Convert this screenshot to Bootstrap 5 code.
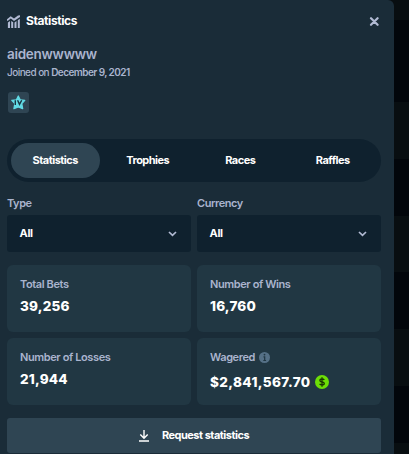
<!DOCTYPE html>
<html lang="en">
<head>
<meta charset="utf-8">
<meta name="viewport" content="width=device-width, initial-scale=1">
<title>Statistics</title>
<link href="https://cdn.jsdelivr.net/npm/bootstrap@5.3.0/dist/css/bootstrap.min.css" rel="stylesheet">
<style>
body{height:454px;overflow:hidden;font-family:Inter,"Noto Sans",sans-serif;color:#fff;
background:linear-gradient(#080e11 20px,#02060b 20px 102px,#080e11 102px 159px,#02060b 159px 216px,#080e11 216px 272px,#02060b 272px 329px,#080e11 329px 386px,#02060b 386px 443px,#080e11 443px)}
svg{display:block;flex:none}
.panel{width:394px;height:454px;background:#1a2c38;border-top-right-radius:6px;padding:12px 13px 0 7px}
.soft{color:#aab4ce}
.title{font:700 12px/18px Inter,sans-serif;letter-spacing:-.4px;margin-left:6px}
.user{font:600 13.500px/20px Inter,sans-serif;letter-spacing:-.28px;margin-top:14px}
.joined{font:500 10px/14px Inter,sans-serif;letter-spacing:-.56px;height:14px;margin-top:1px}
.joined b{font-weight:600}
.tier{width:21px;height:21px;background:#2f4553;border-radius:3px;margin:13px 0 0 1px}
.pill{height:43px;margin-top:26px;padding:4px;background:#0f212e;--bs-nav-pills-border-radius:50rem}
.pill .nav-link{height:35px;padding:0;font:700 11px/35px Inter,sans-serif;letter-spacing:-.52px;color:#fff;flex:1 1 0}
.pill .nav-link.active{background:#2f4553}
.pair{display:grid;grid-template-columns:1fr 1fr;gap:6px;margin-top:13px}
.field-label{font:600 11px/16px Inter,sans-serif;letter-spacing:-.45px;height:20px}
.picker{height:37px;background:#0f212e;border:0;border-radius:3px;padding:0 14px 0 12.500px;color:#fff;font:700 11px/37px Inter,sans-serif;letter-spacing:-.3px}
.tile{height:67px;background:#213743;border-radius:6px;padding:11px 13px 0}
.tile-name{font:600 11px/16px Inter,sans-serif;letter-spacing:-.4px;height:16px}
.tile-value{font:800 13.500px/20px Inter,sans-serif;letter-spacing:.18px;margin-top:4px}
.tile-value.money{margin-top:7px;letter-spacing:.38px}
.request{height:35px;margin-top:13px;background:#2f4553;border:0;border-radius:3px;color:#fff;font:700 11px/35px Inter,sans-serif;letter-spacing:-.5px;padding:0;gap:13px}
</style>
<script src="https://cdn.jsdelivr.net/npm/bootstrap@5.3.0/dist/js/bootstrap.bundle.min.js"></script>
</head>
<body>
<main class="panel">
<header class="d-flex align-items-center">
<svg width="13" height="13" viewBox="0 0 13 13" fill="#b1bad3"><path d="M0 4.200 3.700 1.200 7 3.600 11 .4l2-.2v1.900L7 6 3.800 3.500.9 5.800H0zM.9 7.600l2.100-1.500V13H.9zM4.200 6l2 1.300V13h-2zM7.500 7.500l2-1.400V13h-2zM10.800 5.200l2-1.500V13h-2z"/></svg>
<span class="title">Statistics</span>
<svg class="ms-auto" width="13" height="9" viewBox="0 0 13 9" stroke="#b1bad3" stroke-width="2.200" stroke-linecap="round"><path d="m3 1.200 6.600 6.600M9.600 1.200 3 7.800"/></svg>
</header>
<div class="user soft">aidenwwwww</div>
<div class="joined soft">Joined on <b>December 9, 2021</b></div>
<div class="tier d-flex align-items-center justify-content-center">
<svg width="15" height="15" viewBox="0 0 15 15"><path fill="#62dbe5" stroke="#62dbe5" stroke-width="1.200" stroke-linejoin="round" d="m7.300 1 1.900 3.800 4.600.5-3 3.400.9 5-4.400-1.800-4.400 1.800.9-5-3-3.400 4.600-.5z"/><path d="M4.300 5.200V10M6.600 5.200l1.900 4.200 2.200-4.200" fill="none" stroke="#173541" stroke-width="1.400"/></svg>
</div>
<nav class="pill nav nav-pills rounded-pill flex-nowrap gap-1 text-center">
<a class="nav-link active" href="#">Statistics</a><a class="nav-link" href="#">Trophies</a><a class="nav-link" href="#">Races</a><a class="nav-link" href="#">Raffles</a>
</nav>
<section class="pair">
<div><div class="field-label soft">Type</div><button class="picker w-100 d-flex align-items-center justify-content-between">All<svg width="9" height="7" viewBox="0 0 9 7" fill="none" stroke="#b1bad3" stroke-width="1.700"><path d="m1 2 3.500 3.300L8 2"/></svg></button></div>
<div><div class="field-label soft">Currency</div><button class="picker w-100 d-flex align-items-center justify-content-between">All<svg width="9" height="7" viewBox="0 0 9 7" fill="none" stroke="#b1bad3" stroke-width="1.700"><path d="m1 2 3.500 3.300L8 2"/></svg></button></div>
</section>
<section class="pair">
<div class="tile"><div class="tile-name soft">Total Bets</div><div class="tile-value">39,256</div></div>
<div class="tile"><div class="tile-name soft">Number of Wins</div><div class="tile-value">16,760</div></div>
<div class="tile"><div class="tile-name soft">Number of Losses</div><div class="tile-value">21,944</div></div>
<div class="tile"><div class="tile-name soft d-flex align-items-center">Wagered<svg class="ms-1" width="11" height="11" viewBox="0 0 11 11"><circle cx="5.500" cy="5.500" r="5.500" fill="#557086"/><path d="M4.500 4.800h1.200V8.300M4.300 8.500h2.800" fill="none" stroke="#213743" stroke-width="1.200"/><circle cx="5.500" cy="2.600" r=".9" fill="#213743"/></svg></div>
<div class="tile-value money d-flex align-items-center">$2,841,567.70<svg class="ms-1" width="14" height="14" viewBox="0 0 14 14"><circle cx="7" cy="7" r="7" fill="#6cde07"/><path d="M9.300 5Q8.700 4 7 4 4.900 4 4.900 5.500 4.900 6.700 7 7q2.300.3 2.300 1.600Q9.300 10 7 10 5.300 10 4.600 8.900M7 2.300v9.400" fill="none" stroke="#1b3802" stroke-width="1.300"/></svg></div></div>
</section>
<button class="request w-100 d-flex align-items-center justify-content-center"><svg width="10" height="12" viewBox="0 0 10 12" fill="none" stroke="#fff" stroke-width="1.400"><path d="M5 0v8M1.300 4.500 5 8.200l3.700-3.700M0 11h10"/></svg>Request statistics</button>
</main>
</body>
</html>
